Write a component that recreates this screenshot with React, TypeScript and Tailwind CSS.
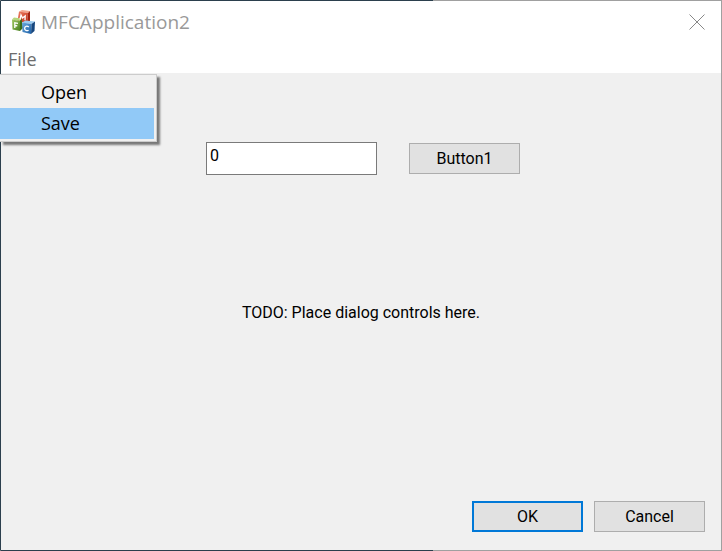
import { useState } from 'react';
import type { ReactNode } from 'react';

function AppIcon() {
  return (
    <svg className="h-6 w-6 shrink-0" viewBox="0 0 24 24" aria-hidden="true">
      <defs>
        <linearGradient id="red" x1="0" y1="0" x2="1" y2="1">
          <stop offset="0" stopColor="#ee8468" />
          <stop offset="1" stopColor="#c22a14" />
        </linearGradient>
        <linearGradient id="green" x1="0" y1="0" x2="1" y2="1">
          <stop offset="0" stopColor="#a3c965" />
          <stop offset="1" stopColor="#457e1c" />
        </linearGradient>
        <linearGradient id="blue" x1="0" y1="0" x2="1" y2="1">
          <stop offset="0" stopColor="#6aa9dc" />
          <stop offset="1" stopColor="#1c5fa6" />
        </linearGradient>
      </defs>
      <path d="M8 1.5 11 0 19 1 17 3Z" fill="#f3a48c" />
      <path d="M8 1.5 17 3 16 13 6.5 11Z" fill="url(#red)" />
      <path d="M17 3 19 1 19 11.5 16 13Z" fill="#a32412" />
      <path d="M1 9.5 3 7.5 10.5 8.5 9 11Z" fill="#b6d67c" />
      <path d="M1 9.5 9 11 9 21 1.5 19.5Z" fill="url(#green)" />
      <path d="M9 11 10.5 8.5 12 18 9 21Z" fill="#3a6b18" />
      <path d="M11 12.5 14.5 10.5 24 11.5 20.5 14Z" fill="#9acbf0" />
      <path d="M11 12.5 20.5 14 20 24 11.5 22Z" fill="url(#blue)" />
      <path d="M20.5 14 24 11.5 23.5 21 20 24Z" fill="#17477f" />
      <g fill="none" stroke="#fff" strokeWidth="1.3">
        <path d="M9 9.5 10 5 11.5 8 14.2 5.8 14 10.2" />
        <path d="M3.8 18V12.8L7 13.3M3.8 15.5 6.3 15.8" />
        <path d="M17.8 17C16 15.4 13.6 16.2 13.6 18.3S15.8 21.2 17.6 20.2" />
      </g>
    </svg>
  );
}

function DialogButton({ children, isDefault = false }: { children: ReactNode; isDefault?: boolean }) {
  return (
    <button
      type="button"
      className={`h-[31px] w-[111px] bg-[#e1e1e1] ${
        isDefault ? 'border-2 border-[#0078d7]' : 'border border-[#adadad]'
      }`}
    >
      {children}
    </button>
  );
}

export default function App() {
  const [value, setValue] = useState('0');

  return (
    <div className="relative flex min-h-screen flex-col border border-[#a0a0a0] border-l-[#2b3f4d] bg-[#f0f0f0] font-[Roboto,'Noto_Sans',sans-serif] text-[16px] text-black">
      <div className="absolute -top-px left-0 h-px w-3/5 bg-[#2b3f4d]" />
      <div className="absolute -bottom-px left-0 h-px w-3/5 bg-[#2b3f4d]" />

      <header className="bg-white">
        <div className="flex h-[42px] items-center pr-4 pl-[10px]">
          <AppIcon />
          <h1 className="ml-1.5 flex-1 font-['Open_Sans','Noto_Sans',sans-serif] text-[19px] leading-6 text-[#999999]">
            MFCApplication2
          </h1>
          <button type="button" aria-label="Close" className="h-4 w-4">
            <svg viewBox="0 0 16 16" className="h-4 w-4" fill="none" stroke="#888888">
              <path d="M.5.5 15.5 15.5M15.5.5.5 15.5" />
            </svg>
          </button>
        </div>
        <nav className="relative h-[30px] font-['Open_Sans','Noto_Sans',sans-serif] text-[18px]">
          <button type="button" aria-haspopup="menu" className="block h-8 pl-[7px] text-[#6d6d6d]">
            File
          </button>
          <div
            role="menu"
            className="absolute top-[31px] -left-px z-10 w-[157px] border border-l-0 border-[#cccccc] bg-[#f0f0f0] py-0.5 pr-0.5 shadow-[3px_3px_2px_rgba(0,0,0,0.5)]"
          >
            <button type="button" role="menuitem" className="block h-[31px] w-full pl-[41px] text-left">
              Open
            </button>
            <button type="button" role="menuitem" className="block h-[31px] w-full bg-[#91c9f7] pl-[41px] text-left">
              Save
            </button>
          </div>
        </nav>
      </header>

      <main className="flex flex-1 flex-col pt-[69px]">
        <div className="flex items-center justify-center gap-8 pl-1">
          <input
            type="text"
            aria-label="Value"
            value={value}
            onChange={(e) => setValue(e.target.value)}
            className="h-[33px] w-[171px] border border-[#7a7a7a] bg-white px-[3px] pb-1.5 outline-none"
          />
          <DialogButton>Button1</DialogButton>
        </div>
        <p className="mt-32 text-center leading-5">TODO: Place dialog controls here.</p>
        <div className="mt-auto flex justify-end gap-[11px] pr-4 pb-[18px]">
          <DialogButton isDefault>OK</DialogButton>
          <DialogButton>Cancel</DialogButton>
        </div>
      </main>
    </div>
  );
}
